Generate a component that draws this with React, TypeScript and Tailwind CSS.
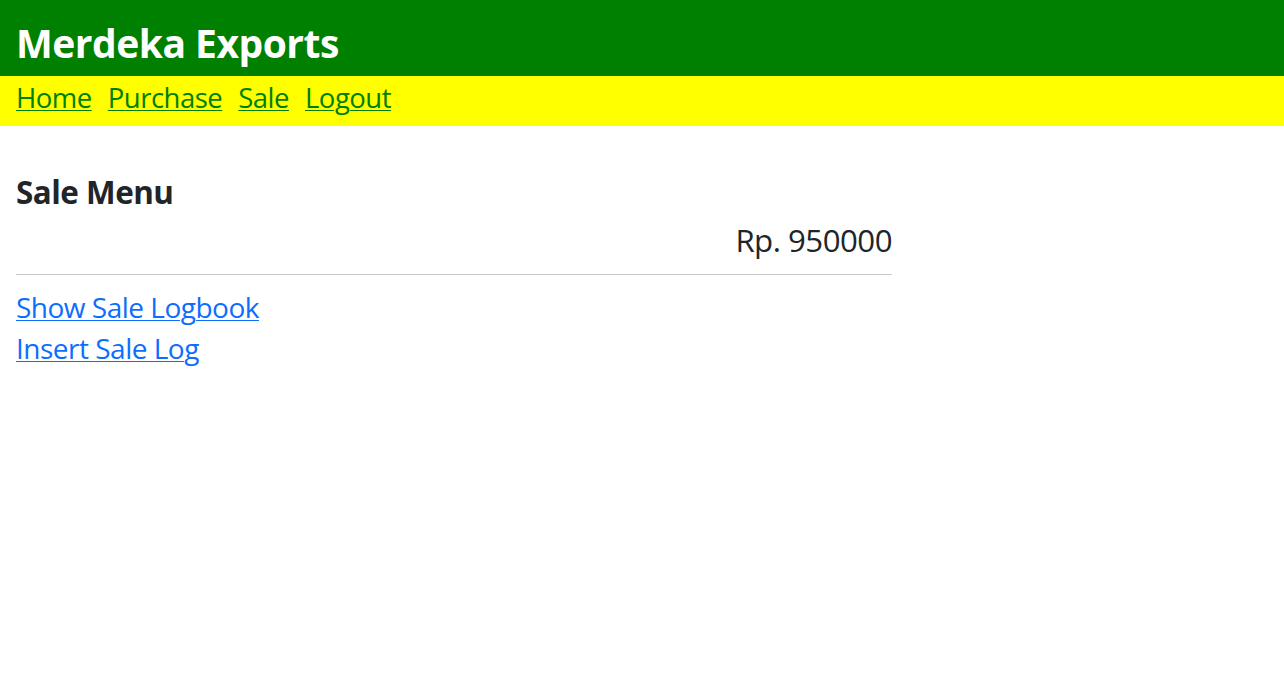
import React from 'react';

export default function App() {
  return (
    <div className="min-h-screen bg-white font-['Open_Sans',sans-serif]">
      <header className="h-[76px] bg-[#008000] px-4 pt-[8px] flex items-center">
        <h1 className="text-[39px] font-bold leading-none text-white tracking-[-0.5px]">Merdeka Exports</h1>
      </header>
      <nav className="h-[50px] bg-[#ffff00] px-4 pb-[6px] flex items-center gap-4 text-[27.5px] leading-none tracking-[-0.5px]">
        {['Home', 'Purchase', 'Sale', 'Logout'].map((item) => (
          <a key={item} href="#" className="text-[#008000] underline underline-offset-[2px] decoration-1">
            {item}
          </a>
        ))}
      </nav>
      <main className="w-[908px] px-4 pt-[46px] text-[#212529]">
        <h2 className="text-[31.4px] font-bold leading-[40px] tracking-[-0.5px]">Sale Menu</h2>
        <div className="text-right text-[31.2px] leading-[42px] tracking-[-0.5px] mt-[7px]">Rp. 950000</div>
        <hr className="mt-[13px] border-t border-[#c8c8c8]" />
        <div className="mt-[12px] flex flex-col gap-[1px] text-[28px] leading-[40px] tracking-[-0.5px]">
          <a href="#" className="text-[#0d6efd] underline underline-offset-[2px] decoration-1 self-start">Show Sale Logbook</a>
          <a href="#" className="text-[#0d6efd] underline underline-offset-[2px] decoration-1 self-start">Insert Sale Log</a>
        </div>
      </main>
    </div>
  );
}
